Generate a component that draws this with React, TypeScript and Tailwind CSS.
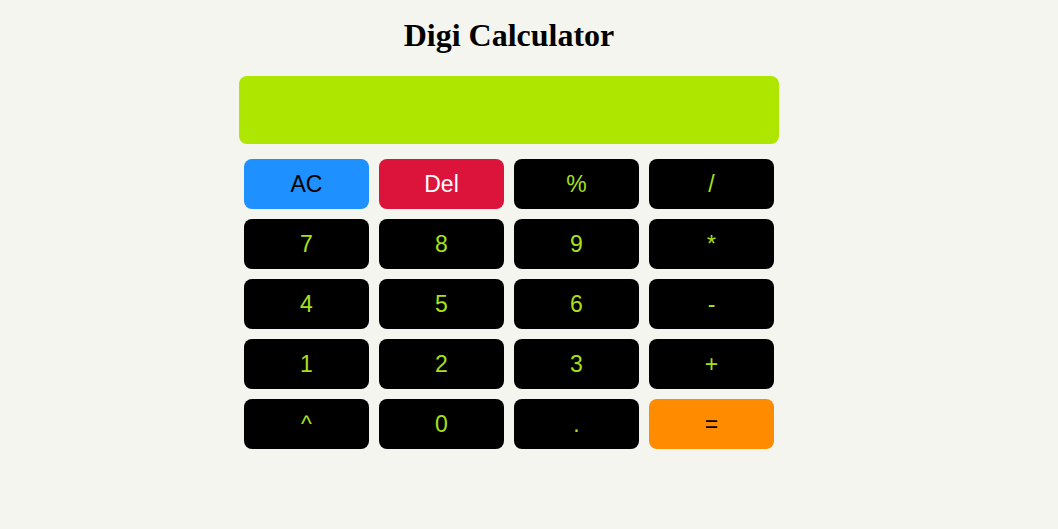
import React from "react";

const keys: { label: string; kind: "ac" | "del" | "eq" | "num" }[] = [
  { label: "AC", kind: "ac" },
  { label: "Del", kind: "del" },
  { label: "%", kind: "num" },
  { label: "/", kind: "num" },
  { label: "7", kind: "num" },
  { label: "8", kind: "num" },
  { label: "9", kind: "num" },
  { label: "*", kind: "num" },
  { label: "4", kind: "num" },
  { label: "5", kind: "num" },
  { label: "6", kind: "num" },
  { label: "-", kind: "num" },
  { label: "1", kind: "num" },
  { label: "2", kind: "num" },
  { label: "3", kind: "num" },
  { label: "+", kind: "num" },
  { label: "^", kind: "num" },
  { label: "0", kind: "num" },
  { label: ".", kind: "num" },
  { label: "=", kind: "eq" },
];

const styles = {
  ac: "bg-[#1e90ff] text-black",
  del: "bg-[#dc143c] text-white",
  eq: "bg-[#ff8c00] text-black",
  num: "bg-black text-[#a8e01a]",
};

export default function App() {
  return (
    <div className="min-h-screen w-full bg-[#f5f5f0] flex justify-center pr-[40px]">
      <div className="w-[540px] flex flex-col items-center">
        <h1 className="mt-[18px] text-[32px] leading-[34px] font-bold text-black font-['Liberation_Serif',serif]">
          Digi Calculator
        </h1>
        <div className="mt-[24px] w-full h-[68px] rounded-[8px] bg-[#aee600]" />
        <div className="mt-[10px] grid grid-cols-4 w-full">
          {keys.map((k) => (
            <button
              key={k.label}
              className={`m-[5px] h-[50px] rounded-[8px] text-[23px] font-['Liberation_Sans',Arial,sans-serif] flex items-center justify-center ${styles[k.kind]}`}
            >
              {k.label}
            </button>
          ))}
        </div>
      </div>
    </div>
  );
}
